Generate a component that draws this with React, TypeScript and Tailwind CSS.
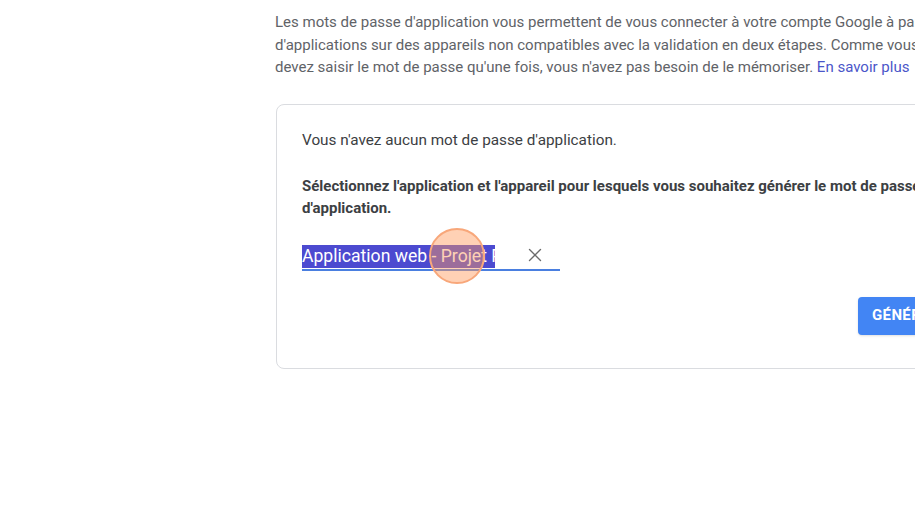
import React from 'react';
import { X } from 'lucide-react';

// App passwords panel (Google account settings, French locale)
export default function App() {
  return (
    <div className="w-[915px] h-[509px] overflow-hidden bg-white font-['Roboto',sans-serif]">
      <div className="pl-[275px] pt-[11px] w-[1200px]">
        {/* Intro paragraph */}
        <p className="text-[15px] leading-[22.5px] text-[#5f6368] whitespace-nowrap">
          Les mots de passe d'application vous permettent de vous connecter à votre compte Google à partir
          <br />
          d'applications sur des appareils non compatibles avec la validation en deux étapes. Comme vous ne
          <br />
          devez saisir le mot de passe qu'une fois, vous n'avez pas besoin de le mémoriser.{' '}
          <span className="text-[#4b56c9]">En savoir plus</span>
        </p>

        {/* Card */}
        <div className="mt-[25px] ml-px w-[800px] h-[265px] rounded-lg border border-[#dadce0] pl-[25px] pt-[25px]">
          <p className="text-[15.3px] leading-[20px] text-[#3c4043]">Vous n'avez aucun mot de passe d'application.</p>
          <p className="mt-[25px] text-[15px] leading-[22px] font-bold text-[#3c4043] whitespace-nowrap">
            Sélectionnez l'application et l'appareil pour lesquels vous souhaitez générer le mot de passe
            <br />
            d'application.
          </p>

          {/* Selected input */}
          <div className="mt-[26px] flex items-end w-[258px] border-b-2 border-[#4a7fe0] h-[26px] relative">
            <div className="w-[193px] h-[23px] bg-[#4c4ad0] overflow-hidden whitespace-nowrap text-[17.6px] leading-[23px] text-white mb-px">
              Application web - Projet Perso
            </div>
            <X className="ml-[29px] mb-[3px] text-[#6b6b6b]" size={22} strokeWidth={1.5} />
            {/* click indicator */}
            <div className="absolute left-[127px] top-[-17px] w-[56px] h-[56px] rounded-full bg-[#ff9a5c]/45 border-2 border-[#f8a77a]" />
          </div>

          <div className="flex mt-[26px] pl-[556px]">
            <button className="h-[38px] px-[14px] rounded bg-[#4285f4] text-white text-[15px] font-bold tracking-wide shadow">
              GÉNÉRER
            </button>
          </div>
        </div>
      </div>
    </div>
  );
}
